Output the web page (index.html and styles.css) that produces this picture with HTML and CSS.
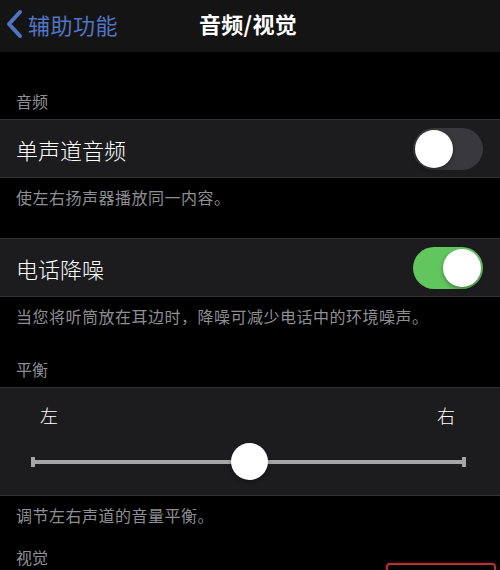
FILE: index.html
```html
<!DOCTYPE html>
<html lang="zh-CN">
<head>
    <meta charset="UTF-8">
    <meta name="viewport" content="width=device-width, initial-scale=1.0">
    <title>音频/视觉</title>
    <link rel="stylesheet" href="styles.css">
</head>
<body>
    <div class="screen">
        <header class="navbar">
            <a href="#" class="back">
                <svg class="chevron" width="18" height="30" viewBox="0 0 18 30">
                    <path d="M15 3 L4 15 L15 27" fill="none" stroke="currentColor" stroke-width="4" stroke-linecap="round" stroke-linejoin="round"/>
                </svg>
                <span>辅助功能</span>
            </a>
            <h1>音频/视觉</h1>
            <div></div>
        </header>

        <div class="group-header first">音频</div>
        <div class="cell">
            <span class="cell-label">单声道音频</span>
            <span class="switch"><span class="knob"></span></span>
        </div>
        <p class="group-footer gap">使左右扬声器播放同一内容。</p>

        <div class="cell">
            <span class="cell-label">电话降噪</span>
            <span class="switch on"><span class="knob"></span></span>
        </div>
        <p class="group-footer">当您将听筒放在耳边时，降噪可减少电话中的环境噪声。</p>

        <div class="group-header">平衡</div>
        <div class="cell slider-cell">
            <div class="slider-labels">
                <span>左</span>
                <span>右</span>
            </div>
            <div class="track">
                <span class="tick"></span>
                <span class="line"></span>
                <span class="tick"></span>
                <span class="thumb"></span>
            </div>
        </div>
        <p class="group-footer">调节左右声道的音量平衡。</p>

        <div class="group-header last">视觉</div>

        <div class="highlight"></div>
    </div>
</body>
</html>
```

FILE: styles.css
```css
html, body {
    margin: 0;
    padding: 0;
    background: #000;
    overflow: hidden;
}

body {
    font-family: "Noto Sans CJK SC", "Noto Sans", sans-serif;
    color: #fff;
}

.screen {
    position: relative;
    width: 500px;
    height: 570px;
    overflow: hidden;
    background: #000;
}

/* nav bar */
.navbar {
    height: 52px;
    background: #141414;
    display: grid;
    grid-template-columns: 1fr auto 1fr;
    align-items: center;
}

.back {
    display: flex;
    align-items: center;
    gap: 5px;
    padding-left: 5px;
    color: #5274c4;
    text-decoration: none;
    font-size: 22px;
    line-height: 30px;
    letter-spacing: 0.5px;
    margin-top: -4px;
}

.navbar h1 {
    margin: 0;
    font-size: 22px;
    font-weight: 600;
    line-height: 30px;
    margin-top: -6px;
    margin-right: 4px;
    letter-spacing: 0.3px;
    color: #fff;
}

/* groups */
.group-header {
    padding: 31px 16px 7px;
    font-size: 16px;
    line-height: 22px;
    color: #8e8e93;
}

.group-header.first {
    padding-top: 38px;
}

.group-header.last {
    padding-top: 20px;
}

.group-footer {
    margin: 0;
    padding: 8px 16px 0;
    font-size: 16px;
    line-height: 22px;
    letter-spacing: 0.5px;
    color: #8e8e93;
}

.group-footer.gap {
    margin-bottom: 30px;
}

.cell {
    background: #1c1c1e;
    border-top: 1px solid #323234;
    border-bottom: 1px solid #323234;
    height: 57px;
    display: flex;
    align-items: center;
    justify-content: space-between;
    padding: 0 17px 0 16px;
}

.cell-label {
    font-size: 22px;
    line-height: 30px;
    font-weight: 300;
}

/* switch */
.switch {
    position: relative;
    width: 70px;
    height: 42px;
    border-radius: 21px;
    background: #39393d;
}

.switch .knob {
    position: absolute;
    top: 2px;
    left: 2px;
    width: 38px;
    height: 38px;
    border-radius: 50%;
    background: #fff;
    box-shadow: 0 2px 4px rgba(0, 0, 0, 0.35);
}

.switch.on {
    background: #62c65f;
}

.switch.on .knob {
    left: 30px;
}

/* balance slider */
.slider-cell {
    height: auto;
    display: block;
    padding: 15px 34px 15px 31px;
}

.slider-labels {
    display: flex;
    justify-content: space-between;
    padding: 0 11px 0 9px;
    font-size: 18px;
    line-height: 24px;
    font-weight: 300;
}

.track {
    position: relative;
    margin-top: 16px;
    height: 37px;
    display: flex;
    align-items: center;
}

.tick {
    width: 4px;
    height: 10px;
    background: #a6a6a6;
}

.line {
    flex: 1;
    height: 4px;
    background: #a6a6a6;
}

.thumb {
    position: absolute;
    top: 0;
    left: 50%;
    width: 37px;
    height: 37px;
    margin-left: -18px;
    border-radius: 50%;
    background: #fff;
    box-shadow: 0 2px 4px rgba(0, 0, 0, 0.3);
}

/* red annotation box */
.highlight {
    position: absolute;
    left: 386px;
    top: 563px;
    width: 106px;
    height: 30px;
    border: 2px solid #b03434;
    border-radius: 4px;
    box-shadow: 0 0 3px rgba(200, 40, 40, 0.6);
}
```
